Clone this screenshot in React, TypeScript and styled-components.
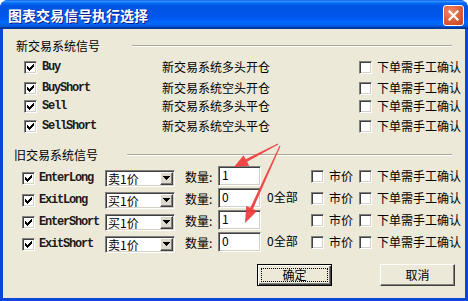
import React from "react";
import styled, { createGlobalStyle, css } from "styled-components";

const CJK = `"Noto Sans CJK SC", "Noto Sans", sans-serif`;
const MONO = `"Liberation Mono", "DejaVu Sans Mono", monospace`;

const GlobalStyle = createGlobalStyle`
  html, body { margin: 0; padding: 0; background: #ffffff; }
  #root { width: 468px; height: 301px; }
`;

const Window = styled.div`
  position: relative;
  width: 468px;
  height: 301px;
  display: flex;
  flex-direction: column;
  background: #0a46da;
  border-radius: 8px 8px 0 0;
  overflow: hidden;
  font-family: ${CJK};
  font-size: 12px;
  color: #000;
`;

const TitleBar = styled.div`
  height: 29px;
  flex: none;
  display: flex;
  align-items: center;
  justify-content: space-between;
  padding: 0 4px 0 8px;
  background: linear-gradient(
    to bottom,
    #0058ee 0%,
    #3a93ff 4%,
    #288eff 6%,
    #127dff 8%,
    #036ffc 10%,
    #0262ee 14%,
    #0057e5 20%,
    #0054e3 24%,
    #0055eb 56%,
    #005bf5 66%,
    #026afe 76%,
    #0062ef 86%,
    #0052d6 92%,
    #0040ab 94%,
    #003092 100%
  );
`;

const Title = styled.div`
  color: #fff;
  font-weight: bold;
  font-size: 14px;
  line-height: 16px;
  text-shadow: 1px 1px 0 #0c1a8a;
`;

const CloseButton = styled.div`
  width: 21px;
  height: 21px;
  box-sizing: border-box;
  border: 1px solid #fff;
  border-radius: 3px;
  margin-top: 1px;
  display: flex;
  align-items: center;
  justify-content: center;
  background: radial-gradient(circle at 35% 30%, #f08a6c 0%, #e2623f 45%, #c8421e 100%);
`;

const Body = styled.div`
  flex: 1;
  margin: 0 3px 3px 3px;
  background: #ece9d8;
  display: flex;
  flex-direction: column;
`;

const GroupHead = styled.div<{ $mt: number; $pad: number }>`
  display: flex;
  align-items: center;
  height: 14px;
  margin-top: ${(p) => p.$mt}px;
  padding-left: ${(p) => p.$pad}px;
  padding-right: 13px;
  line-height: 14px;
  white-space: nowrap;
`;

const EtchedLine = styled.div<{ $gap: number }>`
  flex: 1;
  height: 0;
  margin-left: ${(p) => p.$gap}px;
  border-top: 1px solid #aca899;
  border-bottom: 1px solid #ffffff;
`;

const NewRow = styled.div<{ $mt: number }>`
  display: grid;
  grid-template-columns: 18px 120px 197px 18px auto;
  align-items: center;
  height: 18px;
  margin-top: ${(p) => p.$mt}px;
  padding-left: 21px;
  white-space: nowrap;
`;

const OldRow = styled.div<{ $mt?: number }>`
  display: grid;
  grid-template-columns: 17px 66px 80px 33px 49px 44px 18px 30px 18px auto;
  align-items: center;
  height: 22px;
  margin-top: ${(p) => p.$mt ?? 0}px;
  padding-left: 19px;
  white-space: nowrap;
`;

const Text = styled.span<{ $dy?: number }>`
  font-family: ${CJK};
  font-size: 12px;
  line-height: 14px;
  margin-top: ${(p) => p.$dy ?? 0}px;
`;

const Code = styled.span<{ $dy?: number }>`
  font-family: ${MONO};
  font-size: 12px;
  font-weight: bold;
  letter-spacing: -1.2px;
  line-height: 14px;
  color: #1a1a1a;
  margin-top: ${(p) => p.$dy ?? 0}px;
`;

const Box = styled.span<{ $dy?: number }>`
  display: block;
  width: 13px;
  height: 13px;
  box-sizing: border-box;
  background: #fff;
  border: 1px solid;
  border-color: #808080 #ffffff #ffffff #808080;
  box-shadow: inset 1px 1px #404040, inset -1px -1px #d4d0c8;
  margin-top: ${(p) => p.$dy ?? 0}px;
`;

const CHECK_COLS: Array<[number, number]> = [
  [2, 4],
  [3, 5],
  [4, 6],
  [5, 5],
  [6, 4],
  [7, 3],
  [8, 2],
];

const Checkbox = ({ checked, dy }: { checked?: boolean; dy?: number }) => (
  <Box $dy={dy}>
    {checked && (
      <svg width="11" height="11" viewBox="0 0 11 11" shapeRendering="crispEdges" style={{ display: "block" }}>
        {CHECK_COLS.map(([x, y]) => (
          <rect key={x} x={x} y={y} width="1" height="3" fill="#000" />
        ))}
      </svg>
    )}
  </Box>
);

const Combo = styled.div<{ $dy?: number }>`
  width: 70px;
  height: 17px;
  box-sizing: border-box;
  display: flex;
  align-items: center;
  background: #fff;
  border: 1px solid;
  border-color: #808080 #ffffff #ffffff #808080;
  box-shadow: inset 1px 1px #404040, inset -1px -1px #d4d0c8;
  padding: 1px;
  margin-top: ${(p) => p.$dy ?? 0}px;
`;

const ComboText = styled.span`
  flex: 1;
  padding-left: 1px;
  font-size: 12px;
  line-height: 13px;
  white-space: nowrap;
`;

const ComboButton = styled.span`
  width: 13px;
  height: 13px;
  flex: none;
  box-sizing: border-box;
  display: flex;
  align-items: center;
  justify-content: center;
  background: #dcd8ce;
  border: 1px solid;
  border-color: #ffffff #404040 #404040 #ffffff;
  box-shadow: inset -1px -1px #808080;
`;

const NumInput = styled.div`
  width: 43px;
  height: 20px;
  box-sizing: border-box;
  background: #fff;
  border: 1px solid;
  border-color: #808080 #ffffff #ffffff #808080;
  box-shadow: inset 1px 1px #404040, inset -1px -1px #d4d0c8;
  padding: 1px 0 0 3px;
  font-size: 12px;
  line-height: 14px;
`;

const Footer = styled.div`
  display: flex;
  justify-content: flex-end;
  gap: 48px;
  margin-top: 11px;
  padding-right: 10px;
`;

const PushButton = styled.div<{ $default?: boolean }>`
  width: 75px;
  height: 22px;
  box-sizing: border-box;
  display: flex;
  background: #ece9d8;
  border: 1px solid;
  border-color: #ffffff #404040 #404040 #ffffff;
  box-shadow: inset -1px -1px #808080;
  font-size: 12px;
  ${(p) =>
    p.$default &&
    css`
      border-color: #000;
      box-shadow: inset 1px 1px #ffffff, inset -1px -1px #404040, inset -2px -2px #808080;
    `}
`;

const ButtonLabel = styled.span<{ $focus?: boolean }>`
  flex: 1;
  margin: 3px;
  display: flex;
  align-items: center;
  justify-content: center;
  border: 1px ${(p) => (p.$focus ? "dotted #000" : "solid transparent")};
  line-height: 12px;
`;

const Overlay = styled.svg`
  position: absolute;
  left: 0;
  top: 0;
  pointer-events: none;
`;

function arrowPoints(
  x1: number,
  y1: number,
  x2: number,
  y2: number,
  headLen: number,
  headHalf: number,
  w0: number,
  w1: number
) {
  const dx = x2 - x1;
  const dy = y2 - y1;
  const L = Math.hypot(dx, dy);
  const ux = dx / L;
  const uy = dy / L;
  const nx = -uy;
  const ny = ux;
  const bx = x2 - ux * headLen;
  const by = y2 - uy * headLen;
  const pts = [
    [x1 + (nx * w0) / 2, y1 + (ny * w0) / 2],
    [bx + (nx * w1) / 2, by + (ny * w1) / 2],
    [bx + nx * headHalf, by + ny * headHalf],
    [x2, y2],
    [bx - nx * headHalf, by - ny * headHalf],
    [bx - (nx * w1) / 2, by - (ny * w1) / 2],
    [x1 - (nx * w0) / 2, y1 - (ny * w0) / 2],
  ];
  return pts.map((p) => `${p[0].toFixed(1)},${p[1].toFixed(1)}`).join(" ");
}

const newRows = [
  { code: "Buy", desc: "新交易系统多头开仓", mt: 5 },
  { code: "BuyShort", desc: "新交易系统空头开仓", mt: 3 },
  { code: "Sell", desc: "新交易系统多头平仓", mt: 0 },
  { code: "SellShort", desc: "新交易系统空头平仓", mt: 2 },
];

const oldRows = [
  { code: "EnterLong", price: "卖1价", qty: "1", all: false },
  { code: "ExitLong", price: "买1价", qty: "0", all: true },
  { code: "EnterShort", price: "买1价", qty: "1", all: false },
  { code: "ExitShort", price: "卖1价", qty: "0", all: true },
];

export default function App() {
  return (
    <>
      <GlobalStyle />
      <Window>
        <TitleBar>
          <Title>图表交易信号执行选择</Title>
          <CloseButton>
            <svg width="11" height="11" viewBox="0 0 11 11">
              <path d="M1.5 1.5 L9.5 9.5 M9.5 1.5 L1.5 9.5" stroke="#fff" strokeWidth="2.2" strokeLinecap="square" />
            </svg>
          </CloseButton>
        </TitleBar>
        <Body>
          <GroupHead $mt={10} $pad={13}>
            <Text>新交易系统信号</Text>
            <EtchedLine $gap={32} />
          </GroupHead>
          {newRows.map((r) => (
            <NewRow key={r.code} $mt={r.mt}>
              <Checkbox checked />
              <Code>{r.code}</Code>
              <Text>{r.desc}</Text>
              <Checkbox />
              <Text>下单需手工确认</Text>
            </NewRow>
          ))}
          <GroupHead $mt={13} $pad={11}>
            <Text>旧交易系统信号</Text>
            <EtchedLine $gap={29} />
          </GroupHead>
          {oldRows.map((r, i) => (
            <OldRow key={r.code} $mt={i === 0 ? 3 : 0}>
              <Checkbox checked dy={4} />
              <Code $dy={3}>{r.code}</Code>
              <Combo $dy={4}>
                <ComboText>{r.price}</ComboText>
                <ComboButton>
                  <svg width="7" height="4" viewBox="0 0 7 4" shapeRendering="crispEdges">
                    <path d="M0 0 H7 L3.5 4 Z" fill="#000" />
                  </svg>
                </ComboButton>
              </Combo>
              <Text $dy={1}>数量:</Text>
              <NumInput>{r.qty}</NumInput>
              <Text $dy={-2}>{r.all ? "0全部" : ""}</Text>
              <Checkbox dy={1} />
              <Text>市价</Text>
              <Checkbox dy={1} />
              <Text>下单需手工确认</Text>
            </OldRow>
          ))}
          <Footer>
            <PushButton $default>
              <ButtonLabel $focus>确定</ButtonLabel>
            </PushButton>
            <PushButton>
              <ButtonLabel>取消</ButtonLabel>
            </PushButton>
          </Footer>
        </Body>
        <Overlay width="468" height="301" viewBox="0 0 468 301">
          <polygon points={arrowPoints(278, 144, 234, 167, 14, 6, 1, 3)} fill="#f03a3a" opacity="0.92" />
          <polygon points={arrowPoints(280, 146, 245, 223, 16, 6, 1, 3)} fill="#f03a3a" opacity="0.92" />
        </Overlay>
      </Window>
    </>
  );
}
